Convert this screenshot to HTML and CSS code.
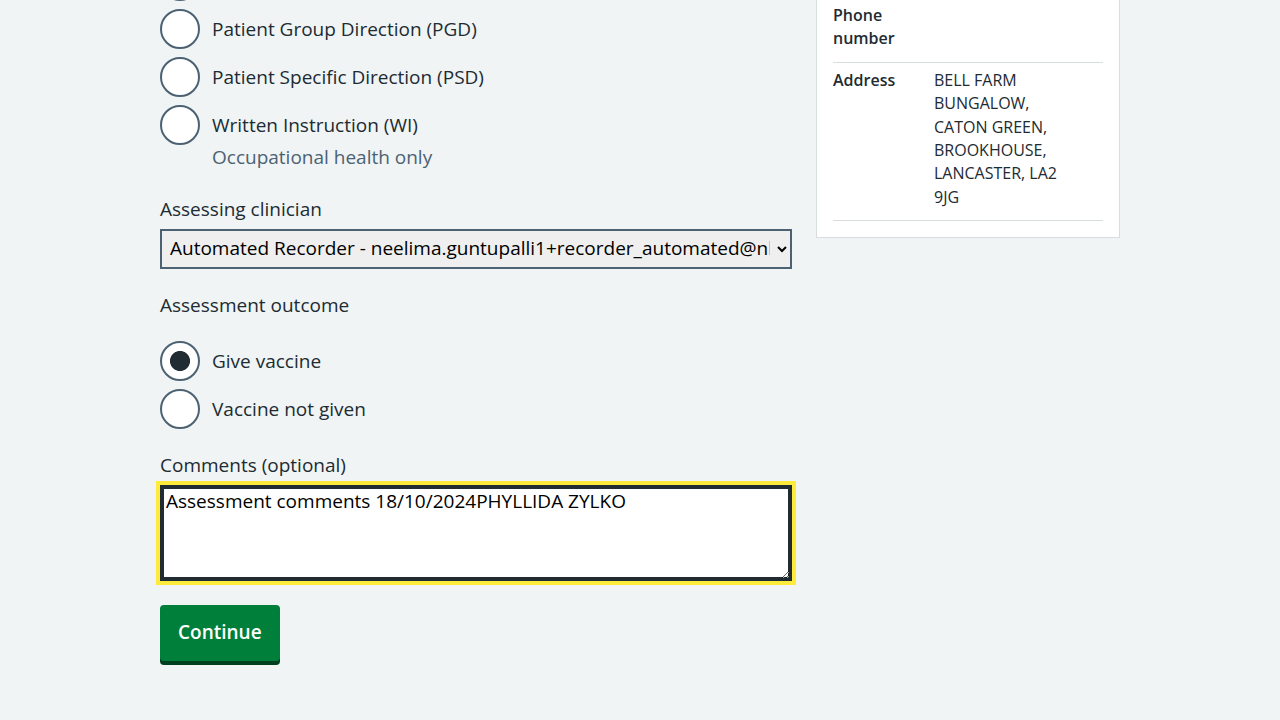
FILE: index.html
```html
<!DOCTYPE html>
<html lang="en">
<head>
<meta charset="utf-8">
<title>Assessment</title>
<link rel="stylesheet" href="styles.css">
</head>
<body>
<div class="container">
  <main class="main">
    <div class="radios radios-top">
      <div class="radio-item">
        <input class="radio-input" type="radio" name="protocol" id="p1" aria-label="National protocol (NP)">
      </div>
      <div class="radio-item">
        <input class="radio-input" type="radio" name="protocol" id="p2">
        <label class="radio-label" for="p2">Patient Group Direction (PGD)</label>
      </div>
      <div class="radio-item">
        <input class="radio-input" type="radio" name="protocol" id="p3">
        <label class="radio-label" for="p3">Patient Specific Direction (PSD)</label>
      </div>
      <div class="radio-item">
        <input class="radio-input" type="radio" name="protocol" id="p4">
        <label class="radio-label" for="p4">Written Instruction (WI)</label>
        <div class="radio-hint">Occupational health only</div>
      </div>
    </div>

    <label class="field-label" for="clinician">Assessing clinician</label>
    <select class="select" id="clinician">
      <option>Automated Recorder - neelima.guntupalli1+recorder_automated@nhs.net</option>
    </select>

    <fieldset class="fieldset">
      <legend class="legend">Assessment outcome</legend>
      <div class="radios radios-outcome">
        <div class="radio-item">
          <input class="radio-input" type="radio" name="outcome" id="o1" checked>
          <label class="radio-label" for="o1">Give vaccine</label>
        </div>
        <div class="radio-item">
          <input class="radio-input" type="radio" name="outcome" id="o2">
          <label class="radio-label" for="o2">Vaccine not given</label>
        </div>
      </div>
    </fieldset>

    <label class="field-label field-label-comments" for="comments">Comments (optional)</label>
    <textarea class="textarea textarea-focus" id="comments">Assessment comments 18/10/2024PHYLLIDA ZYLKO</textarea>

    <div class="actions">
      <button class="button" type="button">Continue</button>
    </div>
  </main>

  <aside class="card">
    <dl class="summary">
      <div class="summary-row">
        <dt class="summary-key">Phone number</dt>
        <dd class="summary-value"></dd>
      </div>
      <div class="summary-row">
        <dt class="summary-key">Address</dt>
        <dd class="summary-value">BELL FARM BUNGALOW, CATON GREEN, BROOKHOUSE, LANCASTER, LA2 9JG</dd>
      </div>
    </dl>
  </aside>
</div>
</body>
</html>
```

FILE: styles.css
```css
html, body {
  margin: 0;
  padding: 0;
}

body {
  background: #f0f4f5;
  color: #212b32;
  font-family: "Open Sans", "Noto Sans", "Liberation Sans", sans-serif;
  font-size: 19px;
  line-height: 28px;
  overflow: hidden;
}

.container {
  width: 960px;
  margin: 0 auto;
  display: grid;
  grid-template-columns: 632px 304px;
  column-gap: 24px;
  align-items: start;
}

.main {
  min-width: 0;
}

/* Radios */
.radios-top {
  margin-top: -39px;
}

.radio-item {
  display: grid;
  grid-template-columns: 40px 1fr;
  margin-bottom: 8px;
}

.radio-item:last-child {
  margin-bottom: 0;
}

.radio-input {
  appearance: none;
  -webkit-appearance: none;
  margin: 0;
  width: 40px;
  height: 40px;
  box-sizing: border-box;
  border: 2px solid #4c6272;
  border-radius: 50%;
  background: #ffffff;
}

.radio-input:checked {
  background: radial-gradient(circle, #212b32 0, #212b32 9.6px, #ffffff 10.4px);
}

.radio-label {
  grid-column: 2;
  font-size: 19px;
  line-height: 28px;
  padding: 6px 12px;
}

.radio-hint {
  grid-column: 2;
  padding-left: 12px;
  margin-top: -2px;
  color: #4c6272;
  font-size: 19px;
  line-height: 28px;
}

/* Labels and controls */
.field-label {
  display: block;
  margin-top: 24px;
  margin-bottom: 6px;
  font-size: 19px;
  line-height: 28px;
}

.field-label-comments {
  margin-top: 22px;
}

.select {
  display: block;
  width: 632px;
  height: 40px;
  box-sizing: border-box;
  margin: 0;
  border: 2px solid #4c6272;
  border-radius: 0;
  background-color: #efefef;
  color: #000000;
  font-family: "Open Sans", "Noto Sans", "Liberation Sans", sans-serif;
  font-size: 19px;
  line-height: 24px;
  padding: 0 4px 2px;
}

.fieldset {
  border: 0;
  margin: 22px 0 0;
  padding: 0;
  min-width: 0;
}

.legend {
  padding: 0;
  font-size: 19px;
  line-height: 28px;
}

.radios-outcome {
  margin-top: 22px;
}

.textarea {
  display: block;
  width: 632px;
  height: 96px;
  box-sizing: border-box;
  margin: 0;
  padding: 2px 4px;
  border: 2px solid #4c6272;
  border-radius: 0;
  background: #ffffff;
  color: #000000;
  font-family: "Open Sans", "Noto Sans", "Liberation Sans", sans-serif;
  font-size: 19px;
  line-height: 24px;
}

.textarea-focus {
  border-color: #212b32;
  box-shadow: inset 0 0 0 2px #212b32;
  outline: 4px solid #ffeb3b;
  outline-offset: 0;
}

.actions {
  margin-top: 24px;
  padding-bottom: 8px;
}

.button {
  appearance: none;
  -webkit-appearance: none;
  display: inline-block;
  margin: 0;
  padding: 11px 16px 13px;
  border: 2px solid transparent;
  border-radius: 4px;
  background-color: #007f3b;
  box-shadow: 0 4px 0 0 #00401e;
  color: #ffffff;
  font-family: "Open Sans", "Noto Sans", "Liberation Sans", sans-serif;
  font-size: 19px;
  font-weight: 600;
  line-height: 28px;
  cursor: pointer;
}

/* Card */
.card {
  margin-top: -17px;
  background: #ffffff;
  border: 1px solid #d8dde0;
  padding: 16px;
}

.summary {
  margin: 0;
  font-size: 16px;
  line-height: 23.4px;
}

.summary-row {
  display: grid;
  grid-template-columns: 101px 150px;
  padding: 6px 0 11px;
  border-bottom: 1px solid #d8dde0;
}

.summary-row:first-child {
  padding-top: 4px;
}

.summary-key {
  margin: 0;
  padding-right: 16px;
  font-weight: 600;
}

.summary-value {
  margin: 0;
}
```
